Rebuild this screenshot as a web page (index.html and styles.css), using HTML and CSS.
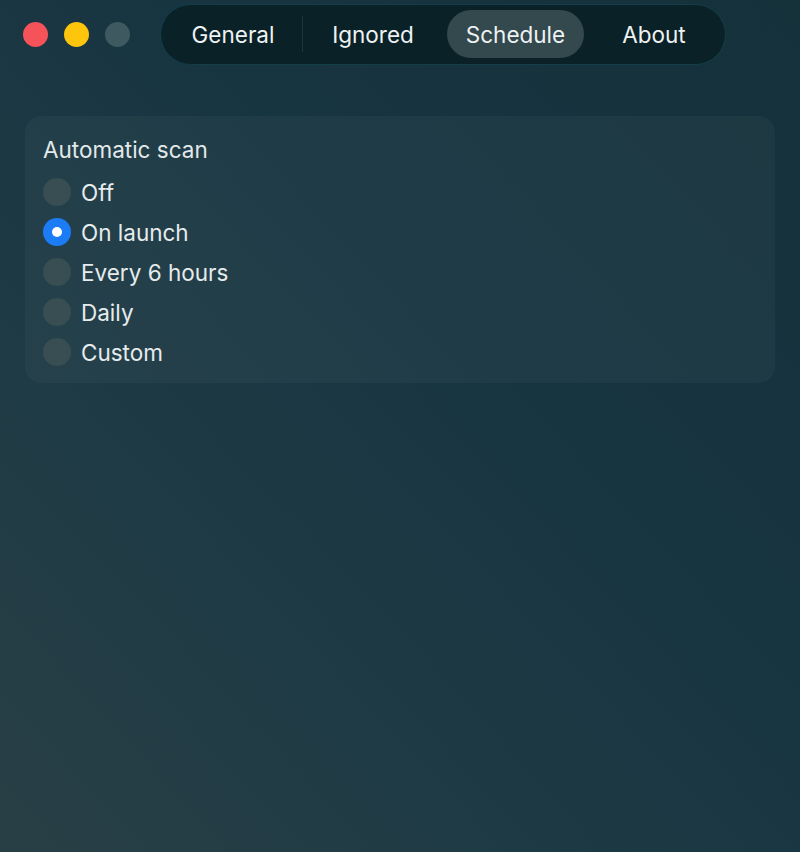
FILE: index.html
```html
<!DOCTYPE html>
<html>
<head>
<meta charset="utf-8">
<link rel="stylesheet" href="styles.css">
</head>
<body>
<div class="window">
  <header class="titlebar">
    <div class="lights">
      <span class="light red"></span>
      <span class="light yellow"></span>
      <span class="light gray"></span>
    </div>
    <nav class="tabs">
      <span class="tab tab-general">General</span>
      <span class="divider"></span>
      <span class="tab tab-ignored">Ignored</span>
      <span class="tab active">Schedule</span>
      <span class="tab tab-about">About</span>
    </nav>
  </header>
  <section class="card">
    <h2 class="card-title">Automatic scan</h2>
    <ul class="options">
      <li class="option"><span class="radio"></span>Off</li>
      <li class="option"><span class="radio checked"></span>On launch</li>
      <li class="option"><span class="radio"></span>Every 6 hours</li>
      <li class="option"><span class="radio"></span>Daily</li>
      <li class="option"><span class="radio"></span>Custom</li>
    </ul>
  </section>
</div>
</body>
</html>
```
FILE: styles.css
```css
html, body {
  margin: 0;
  padding: 0;
}
body {
  width: 800px;
  height: 852px;
  overflow: hidden;
  font-family: "Inter", "Noto Sans", sans-serif;
  color: #e6ebec;
}
.window {
  width: 800px;
  height: 852px;
  box-sizing: border-box;
  background: linear-gradient(to top right, #293f46 0%, #1d3a44 35%, #173441 60%, #15313a 100%);
  padding: 3px 25px 0 25px;
}
.titlebar {
  display: flex;
  align-items: center;
  height: 62px;
}
.lights {
  display: flex;
  gap: 16px;
  margin-left: -2px;
}
.light {
  width: 25px;
  height: 25px;
  border-radius: 50%;
  display: block;
}
.red { background: #f6525a; }
.yellow { background: #fdc50b; }
.gray { background: #3e5a60; }
.tabs {
  margin-left: 30px;
  height: 61px;
  box-sizing: border-box;
  width: 566px;
  border-radius: 31px;
  background: #0a2227;
  border: 1px solid #123f49;
  display: flex;
  align-items: center;
  padding: 0 0 0 6px;
  font-size: 22.5px;
  font-weight: 400;
}
.tab {
  display: flex;
  align-items: center;
  justify-content: center;
  flex-shrink: 0;
  height: 48px;
  border-radius: 24px;
  color: #eef2f3;
}
.tab-general { width: 132px; }
.divider {
  flex-shrink: 0;
  width: 1px;
  height: 36px;
  margin-left: 3px;
  background: #1d3439;
}
.tab-ignored { width: 140px; }
.tab.active {
  width: 137px;
  background: #33494e;
  margin-left: 4px;
}
.tab-about { width: 140px; }
.card {
  margin-top: 51px;
  height: 267px;
  box-sizing: border-box;
  border-radius: 16px;
  background: rgba(255, 255, 255, 0.035);
  padding: 20px 18px 0 18px;
}
.card-title {
  margin: 0;
  font-size: 22.5px;
  font-weight: 400;
  line-height: 28px;
  color: #e3e9ea;
}
.options {
  list-style: none;
  margin: 14px 0 0 0;
  padding: 0;
  display: flex;
  flex-direction: column;
  gap: 12px;
}
.option {
  display: flex;
  align-items: center;
  gap: 10px;
  height: 28px;
  font-size: 22.5px;
  color: #e6ebec;
}
.radio {
  width: 28px;
  height: 28px;
  border-radius: 50%;
  background: #394e53;
  box-sizing: border-box;
  display: flex;
  align-items: center;
  justify-content: center;
}
.radio.checked {
  background: #1b7cf6;
}
.radio.checked::after {
  content: "";
  width: 10px;
  height: 10px;
  border-radius: 50%;
  background: #ffffff;
}
```
